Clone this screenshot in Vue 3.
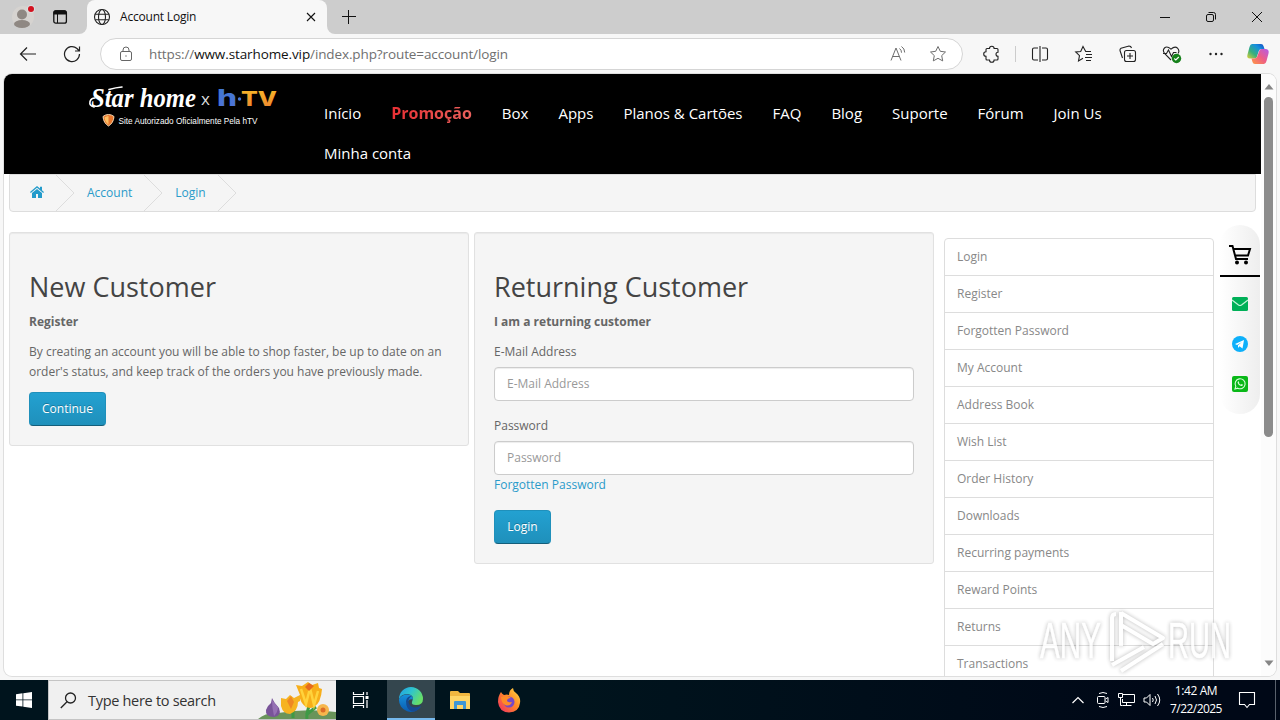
<template>
  <div class="desktop">
    <div class="browser">
      <!-- Tab strip -->
      <div class="tab-strip">
        <div class="tab-tools">
          <svg class="profile" width="24" height="26" viewBox="0 0 24 26">
            <circle cx="12" cy="15" r="11" fill="#d6d3d0" />
            <circle cx="11" cy="12.5" r="5" fill="#8f8883" />
            <ellipse cx="11" cy="22" rx="8" ry="4" fill="#8f8883" />
            <circle cx="20" cy="7" r="4" fill="#dcdcdc" />
            <circle cx="20" cy="7" r="3" fill="#d3121f" />
          </svg>
          <svg class="workspaces" width="16" height="16" viewBox="0 0 16 16">
            <rect x="1.8" y="1.8" width="12.6" height="12.4" rx="2" fill="none" stroke="#111" stroke-width="1.3" />
            <path d="M1.5 3q0-1.7 2-1.7h9q2 0 2 2V5.500H1.500z" fill="#111" />
            <path d="M5.500 5v9" stroke="#111" />
          </svg>
        </div>
        <div class="tab">
          <svg width="18" height="18" viewBox="0 0 18 18" fill="none" stroke="#222" stroke-width="1.1">
            <circle cx="9" cy="9" r="7.500" />
            <ellipse cx="9" cy="9" rx="3.500" ry="7.500" />
            <path d="M2.200 6.200h13.600M2.200 11.800h13.600" />
          </svg>
          <span class="tab-title">Account Login</span>
          <svg width="10" height="10" viewBox="0 0 10 10" stroke="#111" stroke-width="1.100">
            <path d="M1 1l8 8M9 1l-8 8" />
          </svg>
        </div>
        <svg class="new-tab" width="14" height="14" viewBox="0 0 14 14" stroke="#111">
          <path d="M0 6.500h14M6.500 0v14" />
        </svg>
        <div class="window-controls">
          <svg width="46" height="34" viewBox="0 0 46 34" fill="none" stroke="#111"><path d="M18 17.500h10" /></svg>
          <svg width="46" height="34" viewBox="0 0 46 34" fill="none" stroke="#111">
            <rect x="18.500" y="14.500" width="7" height="7" rx="1.500" />
            <path d="M20.500 12.500h5q2 0 2 2v5" />
          </svg>
          <svg width="46" height="34" viewBox="0 0 46 34" fill="none" stroke="#111"><path d="M18 12l10 10M28 12l-10 10" /></svg>
        </div>
      </div>

      <!-- Toolbar -->
      <div class="toolbar">
        <svg class="back" width="18" height="16" viewBox="0 0 18 16" fill="none" stroke="#222" stroke-width="1.200">
          <path d="M17 8H1.500M8 1.500L1.500 8 8 14.500" />
        </svg>
        <svg class="reload" width="18" height="18" viewBox="0 0 18 18" fill="none" stroke="#222" stroke-width="1.200">
          <path d="M16.500 9A7.500 7.500 0 1 1 14 3.500L16.300 6M16.500 1.500V6h-4.500" />
        </svg>
        <div class="address-bar">
          <svg width="14" height="16" viewBox="0 0 14 16" fill="none" stroke="#666">
            <rect x="1.500" y="5.500" width="11" height="9" rx="1.500" />
            <path d="M4 5.500V4a3 3 0 0 1 6 0v1.500" />
            <circle cx="7" cy="10" r=".7" fill="#666" stroke="none" />
          </svg>
          <span class="url">https://<b>www.starhome.vip</b>/index.php?route=account/login</span>
          <svg class="read-aloud" width="18" height="16" viewBox="0 0 18 16" fill="none" stroke="#6d6d6d">
            <path d="M2 14.500L7 2l5 12.500M3.700 10.500h6.600M10.500 2.500q2 1.300 2 4.200M12.500.500q3.200 2 3.200 6" />
          </svg>
          <svg width="18" height="18" viewBox="0 0 18 18" fill="none" stroke="#6d6d6d" stroke-linejoin="round">
            <path d="M9 1.500l2.300 4.800 5.200.7-3.800 3.600 1 5.300L9 13.300l-4.700 2.600 1-5.300L1.500 7l5.200-.7z" />
          </svg>
        </div>
        <div class="toolbar-icons">
          <svg width="20" height="20" viewBox="0 0 20 20" fill="none" stroke="#222" stroke-width="1.100">
            <path d="M5 4.500h2.500a2.300 2.300 0 0 1 4.600 0H15q1 0 1 1v2.700a2 2 0 0 0 0 4V15q0 1-1 1h-2.900a2.300 2.300 0 0 1-4.600 0H5q-1 0-1-1v-2.700a2.300 2.300 0 0 1 0-4.600V5.500q0-1 1-1z" />
          </svg>
          <i class="divider"></i>
          <svg width="20" height="20" viewBox="0 0 20 20" fill="none" stroke="#222" stroke-width="1.100">
            <path d="M8 4H4q-1.500 0-1.500 1.500v9Q2.500 16 4 16h4M12 4h4q1.500 0 1.500 1.500v9Q17.500 16 16 16h-4M10 2v16" />
          </svg>
          <svg width="20" height="20" viewBox="0 0 20 20" fill="none" stroke="#222" stroke-width="1.100">
            <path d="M17 7.500h-5.300L9 2.500l-2.300 5-5 .5 3.800 3.700L4.500 17 9 14.300M12 10.500h6M11 13.500h7M12 16.500h5" />
          </svg>
          <svg width="20" height="20" viewBox="0 0 20 20" fill="none" stroke="#222" stroke-width="1.100">
            <rect x="6.500" y="6.500" width="11" height="11" rx="2" />
            <path d="M12 9v6M9 12h6M4.500 14L2 6.500Q1.700 5 3 4.300L11 2q2 0 2.500 2" />
          </svg>
          <svg class="essentials" width="20" height="20" viewBox="0 0 20 20" fill="none" stroke="#222" stroke-width="1.100">
            <path d="M9 16L3 10Q0 6.500 2.500 4T9 5.200Q13 1.500 15.500 4.200t.5 5.300M1 9.500h3.500l2-3.500 3 6.500 2-4h3" />
            <circle cx="14.500" cy="14.500" r="4.700" fill="#16811b" stroke="none" />
            <path d="M12.300 14.500l1.500 1.500 3-3" stroke="#fff" />
          </svg>
          <svg width="20" height="20" viewBox="0 0 20 20" fill="#222">
            <circle cx="4.500" cy="10" r="1.200" /><circle cx="10" cy="10" r="1.200" /><circle cx="15.500" cy="10" r="1.200" />
          </svg>
          <svg class="copilot" width="24" height="22" viewBox="0 0 24 22">
            <defs>
              <linearGradient id="cp1" x1="0" y1="1" x2="1" y2="0">
                <stop offset="0" stop-color="#e2d134" /><stop offset=".35" stop-color="#37b07c" /><stop offset=".7" stop-color="#1590df" /><stop offset="1" stop-color="#1749c0" />
              </linearGradient>
              <linearGradient id="cp2" x1="1" y1="0" x2="0" y2="1">
                <stop offset="0" stop-color="#b35bea" /><stop offset=".5" stop-color="#ee5d86" /><stop offset="1" stop-color="#ff9a43" />
              </linearGradient>
            </defs>
            <path d="M6 1h9q2 0 2.500 2l1 3h-3q-2 0-2.700 2l-2 6q-.6 1.500-2.200 1.500H4Q.300 15.500 1.500 11.500L3.500 4Q4.300 1 6 1z" fill="url(#cp1)" />
            <path d="M18 21H9q-2 0-2.500-2l-1-3.500h3q2 0 2.700-2l2-5.500q.6-2 2.300-2H20q3.500.5 2.500 4.500L20.500 18q-.8 3-2.500 3z" fill="url(#cp2)" />
          </svg>
        </div>
      </div>

      <!-- Page viewport -->
      <div class="viewport">
        <div class="page">
          <header class="site-header">
            <svg class="logo" width="220" height="100" viewBox="0 0 220 100">
              <defs>
                <linearGradient id="htvBlue" x1="0" y1="0" x2="0" y2="1">
                  <stop offset="0" stop-color="#3d78cf" /><stop offset="1" stop-color="#5271d8" />
                </linearGradient>
                <linearGradient id="htvGold" x1="0" y1="0" x2="0" y2="1">
                  <stop offset="0" stop-color="#f7bd27" /><stop offset="1" stop-color="#ec7e31" />
                </linearGradient>
              </defs>
              <text class="logo-script" x="7" y="33" textLength="105" lengthAdjust="spacingAndGlyphs" font-size="28">Star home</text>
              <!-- entry swash on the S and the long bar of the t -->
              <path d="M10 33q-5-1-4-5.500 1-3.500 5-3.500M25 15.500q7-2 13-2.500" fill="none" stroke="#fff" stroke-width="1.600" stroke-linecap="round" />
              <text class="logo-x" x="117" y="31" font-size="17">x</text>
              <text class="logo-tv" x="133" y="32" textLength="20" lengthAdjust="spacingAndGlyphs" font-size="23" fill="url(#htvBlue)">h</text>
              <circle cx="155.500" cy="25" r="1.700" fill="#4777d4" />
              <text class="logo-tv" x="157" y="32" textLength="36" lengthAdjust="spacingAndGlyphs" font-size="20" fill="url(#htvGold)">TV</text>
              <path d="M24.500 40.500q3 0 5.500 2-.500 6.500-5.500 9.500-5-3-5.500-9.500 2.500-2 5.500-2z" fill="#e8762c" stroke="#f5d9b4" />
              <path d="M24.500 42v8.500q-3.300-2-4-7 1.800-1.500 4-1.500z" fill="#ffc063" />
              <text class="logo-tag" x="34.500" y="50" textLength="139" lengthAdjust="spacingAndGlyphs" font-size="8.500">Site Autorizado Oficialmente Pela hTV</text>
            </svg>
            <nav class="main-nav">
              <a v-for="item in navItems" :key="item" :class="{ promo: item === 'Promoção' }">{{ item }}</a>
            </nav>
          </header>

          <div class="breadcrumb">
            <svg class="home" width="14" height="12" viewBox="0 0 14 12" fill="#239bcb">
              <path d="M7 0L0 6l.8.900L7 1.800l6.200 5.100L14 6 12 4.300V.8h-2v1.800zM7 2.900l-5 4V12h4V8h2v4h4V6.900z" />
            </svg>
            <svg class="chevron" width="19" height="36" viewBox="0 0 19 36"><path d="M0 0l18 18L0 36" /></svg>
            <a>Account</a>
            <svg class="chevron" width="19" height="36" viewBox="0 0 19 36"><path d="M0 0l18 18L0 36" /></svg>
            <a>Login</a>
            <svg class="chevron" width="19" height="36" viewBox="0 0 19 36"><path d="M0 0l18 18L0 36" /></svg>
          </div>

          <main class="columns">
            <section class="well">
              <h2>New Customer</h2>
              <p><strong>Register</strong></p>
              <p class="intro">By creating an account you will be able to shop faster, be up to date on an order's status, and keep track of the orders you have previously made.</p>
              <button class="btn-primary">Continue</button>
            </section>

            <section class="well">
              <h2>Returning Customer</h2>
              <p><strong>I am a returning customer</strong></p>
              <form @submit.prevent>
                <div class="form-group">
                  <label for="email">E-Mail Address</label>
                  <input id="email" v-model="email" type="text" placeholder="E-Mail Address" />
                </div>
                <div class="form-group">
                  <label for="password">Password</label>
                  <input id="password" v-model="password" type="password" placeholder="Password" />
                  <a>Forgotten Password</a>
                </div>
                <button class="btn-primary btn-login">Login</button>
              </form>
            </section>

            <aside class="list-group">
              <a v-for="link in accountLinks" :key="link">{{ link }}</a>
            </aside>
          </main>
        </div>

        <!-- Floating contact bar -->
        <div class="contact-bar">
          <div class="contact-cart">
            <svg width="24" height="24" viewBox="0 0 24 24" fill="none" stroke="#000" stroke-width="2">
              <path d="M1 3h3.500L8 16h12M5.200 6h16.800l-2 6.500H7.200" />
              <circle cx="9" cy="19.500" r="2" fill="#000" stroke="none" />
              <circle cx="18" cy="19.500" r="2" fill="#000" stroke="none" />
            </svg>
          </div>
          <svg width="16" height="16" viewBox="0 0 16 16">
            <rect y="1" width="16" height="14" rx="1.500" fill="#00b058" />
            <path d="M0 4l6.500 5q1.500 1 3 0L16 4" fill="none" stroke="#c5f5da" stroke-width="1.200" />
          </svg>
          <svg width="16" height="16" viewBox="0 0 16 16">
            <circle cx="8" cy="8" r="8" fill="#0eb0fa" />
            <path d="M3 8l9-4-1.500 8.500L7.500 10.300 6 12V9.300L10 6 5 9z" fill="#fff" />
          </svg>
          <svg width="16" height="16" viewBox="0 0 16 16">
            <rect width="16" height="16" rx="2" fill="#09b818" />
            <path d="M3 13l.8-2.700a5 5 0 1 1 2 1.900z" fill="none" stroke="#d8ffdb" stroke-width="1.100" />
            <path d="M6 5.500q.7-.7 1.200.7l-.3.900q.7 1.200 2 1.700l.800-.8 1.300.8q-.4 1.400-1.800 1.200Q6.200 9.200 5.500 6.700z" fill="#d8ffdb" />
          </svg>
        </div>

        <div class="scrollbar">
          <svg width="10" height="6" viewBox="0 0 10 6"><path d="M5 0l4.500 5.500h-9z" fill="#858585" /></svg>
          <div class="thumb"></div>
          <svg width="10" height="6" viewBox="0 0 10 6"><path d="M5 6L.5.500h9z" fill="#858585" /></svg>
        </div>
      </div>
    </div>

    <!-- Recording watermark over the desktop -->
    <svg class="watermark" width="220" height="72" viewBox="0 0 220 72">
      <g fill="#fff" stroke="#fff" stroke-width=".5">
        <text x="7" y="53" textLength="61" lengthAdjust="spacingAndGlyphs" font-size="50">ANY</text>
        <text x="135" y="53" textLength="63" lengthAdjust="spacingAndGlyphs" font-size="50">RUN</text>
      </g>
      <g fill="none" stroke="#fff" stroke-width="4" stroke-linejoin="round">
        <path d="M88 7v34M79 56V13q0-4 4-4M88 8l42 25-10 6-32-19M88 66l42-27M79 60l32-18" />
      </g>
    </svg>

    <!-- Taskbar -->
    <div class="taskbar">
      <div class="start">
        <svg width="16" height="16" viewBox="0 0 16 16" fill="#fff">
          <path d="M0 2.200l6.500-.9v6.200H0zM7.300 1.200L16 0v7.500H7.300zM0 8.300h6.500v6.300L0 13.700zM7.300 8.300H16V16l-8.700-1.200z" />
        </svg>
      </div>
      <div class="search">
        <svg width="17" height="17" viewBox="0 0 17 17" fill="none" stroke="#222" stroke-width="1.300">
          <circle cx="10.500" cy="6" r="5" /><path d="M7 9.800L.8 16" />
        </svg>
        <span>Type here to search</span>
        <svg class="flowers" width="80" height="38" viewBox="0 0 80 38">
          <path d="M2 38q8-7 20-6 28-5 58-1v7z" fill="#69945a" />
          <path d="M37 37V22M51 38q-1-7 4-17M50 34l10-8" fill="none" stroke="#3f9a45" stroke-width="3" />
          <path d="M16 17q2 5 7 10 3 8-5 9-9 0-8-7 1-4 5-7z" fill="#795499" />
          <path d="M16 19q0 8 2 16 4-4 4-9z" fill="#9671b4" />
          <path d="M25 17l5 1 4-4 4 3 6-3v6l-2 1q0 9-8 12-7 0-9-8z" fill="#f6b321" />
          <path d="M31 20l4-5 3 6-3 7z" fill="#ef8823" />
          <path d="M40 4l6 1 6-4 4 3 6-2 1 5 3 1q-1 14-8 18-7 3-12-4-3-5-2-8z" fill="#f7ae19" />
          <path d="M45 8l5 15 4-16 4 17 4-14" fill="none" stroke="#ffd33c" stroke-width="2.500" />
          <path d="M49 6l4-4 5 3-5 5z" fill="#e66b1d" />
          <circle cx="67" cy="29" r="6" fill="#f6b64c" /><circle cx="67" cy="29" r="2.500" fill="#dc6d27" />
        </svg>
      </div>
      <div class="task-icon">
        <svg width="18" height="18" viewBox="0 0 18 18" fill="none" stroke="#fff" stroke-width="1.200">
          <path d="M1.500 1v2.500h10V1M1.500 17v-2.500h10V17M1.500 5.500h10v7h-10zM15 1v3M15 9v8" />
          <path d="M13.500 6.500h3" stroke-width="3" />
        </svg>
      </div>
      <div class="task-icon active">
        <svg width="26" height="26" viewBox="0 0 26 26">
          <defs>
            <linearGradient id="edgeTop" x1="0" y1="0" x2="1" y2=".5">
              <stop offset="0" stop-color="#219de5" /><stop offset=".5" stop-color="#2ec3cf" /><stop offset="1" stop-color="#67df69" />
            </linearGradient>
            <linearGradient id="edgeBody" x1="0" y1="0" x2="0" y2="1">
              <stop offset="0" stop-color="#1690dc" /><stop offset="1" stop-color="#0b5bb0" />
            </linearGradient>
          </defs>
          <path d="M1 12A12 12 0 0 1 25 12q0 6-7 6-5 0-4-3 3-7-4-8Q3 7 1 12z" fill="url(#edgeTop)" />
          <path d="M1 12q3-5 9-4.500 5 .5 5 5-4-1-5 2-1 5 5 7 4 1 8-2A12 12 0 0 1 1 12z" fill="url(#edgeBody)" />
          <path d="M8 14q1-5 6-5-4 2-3.500 6 1 5 6 5.500 3 0 6.500-2-3 6.500-9 6-6-2-6-10.500z" fill="#164a91" />
        </svg>
      </div>
      <div class="task-icon">
        <svg width="22" height="20" viewBox="0 0 22 20">
          <path d="M1 2q0-1 1-1h7l2 2h9q1 0 1 1v14H1z" fill="#f1b740" />
          <path d="M1 6h20v13H1z" fill="#ffd566" />
          <path d="M5 19v-7q0-1 1-1h10q1 0 1 1v7h-3v-4H8v4z" fill="#3f97d5" />
        </svg>
      </div>
      <div class="task-icon">
        <svg width="24" height="25" viewBox="0 0 24 25">
          <defs>
            <linearGradient id="foxFire" x1="1" y1="0" x2="0" y2="1">
              <stop offset="0" stop-color="#ffe14a" /><stop offset=".45" stop-color="#ff8a25" /><stop offset="1" stop-color="#f02868" />
            </linearGradient>
          </defs>
          <path d="M4 4q1 2 3 3 3-1 5 0 0-5 4-7 0 3 3 5 5 4 4 10-1 9-11 9.500Q2 24 1 14q0-6 3-10z" fill="url(#foxFire)" />
          <circle cx="12" cy="14" r="5.500" fill="#7549c8" />
          <path d="M4 9q6-2 10 1-3 0-4 2 0 3 5 2-2 5-7 3-4-3-4-8z" fill="#ff8b27" />
        </svg>
      </div>

      <div class="tray">
        <svg width="12" height="8" viewBox="0 0 12 8" fill="none" stroke="#fff" stroke-width="1.200"><path d="M.500 7L6 1.500 11.500 7" /></svg>
        <svg class="meet" width="14" height="18" viewBox="0 0 14 18" fill="none" stroke="#fff">
          <rect x="1.500" y="5.500" width="7.500" height="7" rx="1" /><path d="M9.500 8l2.500-1.500v5L9.500 10M3 2.500q4-2 8 0M3 15.500q4 2 8 0" />
        </svg>
        <svg width="17" height="16" viewBox="0 0 17 16" fill="none" stroke="#fff">
          <path d="M5 2.500h11.500v8H4.500V7M8.500 10.500v3M4.500 13.500h9M.500 1.500h4v4h-4zM2.500 5.500v8h2" />
        </svg>
        <svg width="18" height="16" viewBox="0 0 18 16" fill="none" stroke="#fff">
          <path d="M1 6h2.500L7 2.500v11L3.500 10H1zM9.500 6q1.500 2 0 4M12 4q3 4 0 8M14.500 2q4.500 6 0 12" />
        </svg>
        <div class="clock">
          <span>1:42 AM</span>
          <span class="date">7/22/2025</span>
        </div>
        <svg class="notify" width="18" height="18" viewBox="0 0 18 18" fill="none" stroke="#fff" stroke-width="1.100">
          <path d="M1.500 1.500h15v12h-5l-2.500 3-2.500-3h-5z" />
        </svg>
        <i class="show-desktop"></i>
      </div>
    </div>
  </div>
</template>

<script setup>
import { ref } from 'vue'

const email = ref('')
const password = ref('')

const navItems = [
  'Início', 'Promoção', 'Box', 'Apps', 'Planos & Cartões', 'FAQ',
  'Blog', 'Suporte', 'Fórum', 'Join Us', 'Minha conta'
]

const accountLinks = [
  'Login', 'Register', 'Forgotten Password', 'My Account', 'Address Book', 'Wish List',
  'Order History', 'Downloads', 'Recurring payments', 'Reward Points', 'Returns', 'Transactions'
]
</script>

<style>
body {
  margin: 0;
  overflow: hidden;
}
</style>

<style scoped>
* {
  box-sizing: border-box;
}

svg {
  display: block;
  flex-shrink: 0;
}

.desktop {
  position: relative;
  width: 1280px;
  height: 720px;
  overflow: hidden;
  display: flex;
  flex-direction: column;
  font-family: "Open Sans", "Noto Sans", sans-serif;
}

.browser {
  height: 680px;
  background: #f7f7f7;
  display: flex;
  flex-direction: column;
}

/* Tab strip */
.tab-strip {
  height: 34px;
  display: flex;
  align-items: center;
  background: linear-gradient(#cdcdcd 50%, #f7f7f7 50%);
}

.tab-tools {
  width: 87px;
  height: 34px;
  display: flex;
  align-items: center;
  padding-left: 11px;
  background: #cdcdcd;
  border-bottom-right-radius: 8px;
}

.profile {
  margin-bottom: 4px;
}

.workspaces {
  margin-left: 17px;
}

.tab {
  width: 240px;
  height: 34px;
  display: flex;
  align-items: center;
  padding: 0 11px 0 6px;
  background: #f7f7f7;
  border-radius: 8px 8px 0 0;
  box-shadow: 0 -8px 0 #cdcdcd;
}

.tab-title {
  flex: 1;
  margin-left: 9px;
  padding-bottom: 1px;
  font-size: 12px;
  letter-spacing: -0.2px;
  color: #111;
}

.new-tab {
  height: 34px;
  width: 44px;
  padding: 10px 15px;
  background: #cdcdcd;
  border-bottom-left-radius: 8px;
}

.window-controls {
  flex: 1;
  height: 34px;
  display: flex;
  justify-content: flex-end;
  background: #cdcdcd;
}

/* Toolbar */
.toolbar {
  height: 40px;
  display: flex;
  align-items: center;
  padding-left: 19px;
}

.reload {
  margin-left: 26px;
}

.address-bar {
  width: 863px;
  height: 32px;
  margin-left: 19px;
  padding: 0 15px 0 18px;
  display: flex;
  align-items: center;
  background: #fff;
  border: 1px solid #d5d5d5;
  border-radius: 16px;
}

.url {
  flex: 1;
  margin-left: 16px;
  font-size: 13.5px;
  letter-spacing: -0.11px;
  white-space: nowrap;
  color: #707070;
}

.url b {
  font-weight: 400;
  color: #111;
}

.read-aloud {
  margin-right: 22px;
}

.toolbar-icons {
  flex: 1;
  height: 40px;
  display: flex;
  align-items: center;
  gap: 24px;
  padding-left: 19px;
}

.divider {
  width: 1px;
  height: 16px;
  margin: 0 -10px 0 -11px;
  background: #ccc;
}

.copilot {
  margin-left: -4px;
}

/* Page viewport */
.viewport {
  position: relative;
  width: 1272px;
  height: 602px;
  margin-left: 4px;
  display: flex;
  overflow: hidden;
  background: #fff;
  border-radius: 8px;
  box-shadow: 0 0 0 1px #dedede;
}

.page {
  width: 1257px;
  height: 602px;
  overflow: hidden;
  font-size: 12px;
  line-height: 20px;
  color: #666;
}

.site-header {
  height: 100px;
  display: flex;
  background: #000;
}

.logo {
  margin-left: 80px;
}

.logo-script {
  font-family: "Liberation Serif", serif;
  font-style: italic;
  font-weight: 700;
  fill: #fff;
}

.logo-x {
  font-family: "Open Sans", sans-serif;
  fill: #ddd;
}

.logo-tv {
  font-family: "Inter", sans-serif;
  font-weight: 800;
}

.logo-tag {
  font-family: "Liberation Sans", sans-serif;
  fill: #fff;
}

.main-nav {
  width: 850px;
  margin-left: 5px;
  padding-top: 19px;
  display: flex;
  flex-wrap: wrap;
  align-content: flex-start;
}

.main-nav a {
  padding: 0 15px;
  line-height: 40px;
  font-size: 15px;
  color: #fff;
  white-space: nowrap;
}

.main-nav .promo {
  font-size: 16px;
  font-weight: 700;
  color: transparent;
  background: linear-gradient(90deg, #e8262c, #ea6a64);
  background-clip: text;
}

a {
  color: #2a9bca;
}

.breadcrumb {
  height: 38px;
  margin: 0 5px 20px;
  padding-left: 20px;
  display: flex;
  align-items: center;
  background: #f5f5f5;
  border: 1px solid #ddd;
  border-radius: 0 0 4px 4px;
}

.home {
  margin-bottom: 2px;
}

.breadcrumb a {
  margin-left: 12px;
}

.chevron {
  margin-left: 12px;
  fill: none;
  stroke: #ddd;
}

.columns {
  display: flex;
  align-items: flex-start;
  padding-left: 5px;
}

.well {
  width: 460px;
  margin-right: 5px;
  padding: 19px;
  background: #f5f5f5;
  border: 1px solid #e1e1e1;
  border-radius: 3px;
  box-shadow: inset 0 1px 1px rgba(0, 0, 0, 0.05);
}

.well h2 {
  height: 30px;
  margin: 20px 0 10px;
  font-size: 27px;
  font-weight: 400;
  line-height: 30px;
  color: #444;
}

.well p {
  margin: 0 0 10px;
}

.btn-primary {
  display: block;
  height: 34px;
  padding: 0 12px;
  font: 12px/20px "Open Sans", sans-serif;
  color: #fff;
  text-shadow: 0 -1px 0 rgba(0, 0, 0, 0.25);
  background: linear-gradient(#23a1d1, #1f90bb);
  border: 1px solid #1f90bb;
  border-bottom-color: #145e7a;
  border-radius: 4px;
}

.btn-login {
  width: 57px;
}

.form-group {
  margin-bottom: 15px;
}

.form-group label {
  display: block;
  margin-bottom: 5px;
}

.form-group input {
  display: block;
  width: 100%;
  height: 34px;
  padding: 5px 12px 7px;
  font: 12px/20px "Open Sans", sans-serif;
  color: #555;
  background: #fff;
  border: 1px solid #ccc;
  border-radius: 4px;
  box-shadow: inset 0 1px 1px rgba(0, 0, 0, 0.075);
}

.form-group input::placeholder {
  color: #999;
}

.form-group a {
  display: block;
}

.list-group {
  width: 270px;
  margin: 6px 0 0 5px;
  border: 1px solid #ddd;
  border-radius: 4px 4px 0 0;
}

.list-group a {
  display: block;
  height: 37px;
  padding: 8px 12px;
  color: #888;
  border-bottom: 1px solid #ddd;
}

/* Contact bar stays above the page content */
.contact-bar {
  position: absolute;
  top: 151px;
  right: 16px;
  width: 40px;
  height: 189px;
  display: flex;
  flex-direction: column;
  align-items: center;
  gap: 24px;
  background: linear-gradient(90deg, #fff, #eee);
  border-radius: 20px;
}

.contact-cart {
  width: 40px;
  height: 52px;
  margin-bottom: -5px;
  padding: 18px 8px 0;
  border-bottom: 2px solid #000;
}

/* Scrollbar */
.scrollbar {
  width: 15px;
  display: flex;
  flex-direction: column;
  align-items: center;
  padding: 10px 0;
  background: #fcfcfc;
}

.thumb {
  width: 9px;
  height: 340px;
  margin: 7px 0 auto;
  background: #8b8b8b;
  border-radius: 5px;
}

/* Watermark */
.watermark {
  position: absolute;
  left: 1033px;
  top: 605px;
  font-family: "Liberation Sans", sans-serif;
  opacity: 0.8;
  filter: drop-shadow(0 0 2px rgba(0, 0, 0, 0.35));
}

/* Taskbar */
.taskbar {
  height: 40px;
  display: flex;
  align-items: center;
  background: linear-gradient(90deg, #00141d 45%, #000817 90%);
}

.start {
  width: 48px;
  padding-left: 16px;
}

.search {
  width: 288px;
  height: 40px;
  display: flex;
  align-items: center;
  padding-left: 11px;
  background: #f0f0f0;
  border: 1px solid #c4c4c4;
  border-right: 0;
}

.search span {
  flex: 1;
  margin-left: 11px;
  font-size: 14.5px;
  letter-spacing: -0.3px;
  white-space: nowrap;
  color: #333;
}

.task-icon {
  width: 49px;
  height: 40px;
  display: flex;
  align-items: center;
  justify-content: center;
}

.task-icon.active {
  width: 48px;
  margin-left: 2px;
  padding-top: 2px;
  background: #34464e;
  border-bottom: 2px solid #76b9ed;
}

.tray {
  flex: 1;
  height: 40px;
  display: flex;
  align-items: center;
  justify-content: flex-end;
  gap: 8px;
}

.meet {
  margin-left: 4px;
}

.clock {
  width: 54px;
  display: flex;
  flex-direction: column;
  align-items: center;
  font-size: 12px;
  line-height: 18px;
  letter-spacing: -0.4px;
  color: #fff;
}

.date {
  letter-spacing: -0.55px;
}

.notify {
  margin-left: 7px;
}

.show-desktop {
  width: 5px;
  height: 40px;
  margin-left: 11px;
  border-left: 1px solid #59616c;
}
</style>
